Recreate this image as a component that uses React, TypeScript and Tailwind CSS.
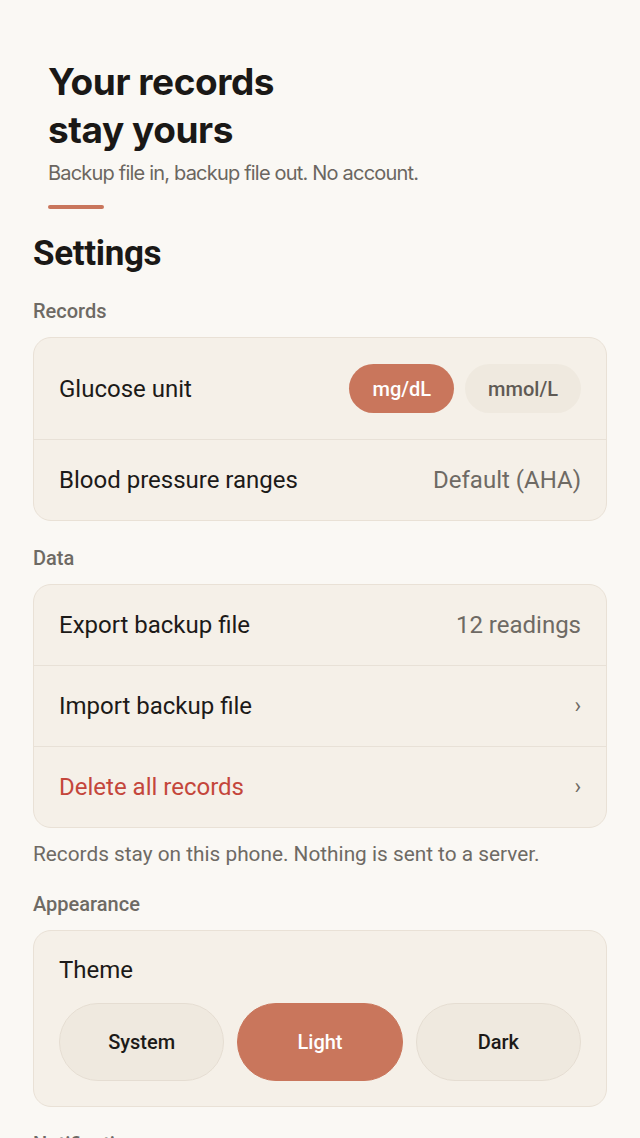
import { ReactNode } from "react";

const SANS = "font-['Roboto','Liberation_Sans',sans-serif]";
const DISPLAY = "font-['Inter','Roboto',sans-serif]";

function SectionLabel({ children }: { children: ReactNode }) {
  return (
    <div className="mt-[25px] text-[20px] leading-[24px] font-medium text-[#6e6a64]">
      {children}
    </div>
  );
}

function Card({ children }: { children: ReactNode }) {
  return (
    <div className="mt-[14px] overflow-hidden rounded-[18px] border-[1.5px] border-[#e9e1d6] bg-[#f5f0e8]">
      {children}
    </div>
  );
}

function Row({
  label,
  right,
  danger,
  chevron,
  last,
}: {
  label: string;
  right?: ReactNode;
  danger?: boolean;
  chevron?: boolean;
  last?: boolean;
}) {
  return (
    <div
      className={
        "flex items-center justify-between px-[25px] py-[26px] " +
        (last ? "" : "border-b-[1.5px] border-[#e8e1d7]")
      }
    >
      <span
        className={
          "text-[24px] leading-[28px] " +
          (danger ? "text-[#c4463b]" : "text-[#1c1a18]")
        }
      >
        {label}
      </span>
      {right && (
        <span className="text-[24px] leading-[28px] text-[#6e6a64]">{right}</span>
      )}
      {chevron && (
        <span className="text-[22px] leading-[28px] text-[#6e6a64]">›</span>
      )}
    </div>
  );
}

export default function App() {
  return (
    <div className={`min-h-[1138px] bg-[#faf8f4] px-[33px] pt-[58px] pb-10 ${SANS}`}>
      {/* Hero */}
      <div className="px-[15px]">
        <h1
          className={`${DISPLAY} text-[37px] leading-[48px] font-bold tracking-[-0.012em] text-[#1a1816]`}
        >
          Your records
          <br />
          stay yours
        </h1>
        <p
          className={`${DISPLAY} mt-[6px] text-[20px] leading-[26px] tracking-[-0.04em] text-[#6b6660]`}
        >
          Backup file in, backup file out. No account.
        </p>
        <div className="mt-[19px] h-[4px] w-[56px] rounded-full bg-[#c9765c]" />
      </div>

      <h2 className="mt-[25px] text-[35px] leading-[40px] font-bold tracking-[-0.01em] text-[#1a1816]">
        Settings
      </h2>

      {/* Records */}
      <SectionLabel>Records</SectionLabel>
      <Card>
        <div className="flex items-center justify-between border-b-[1.5px] border-[#e8e1d7] px-[25px] py-[26px]">
          <span className="text-[24px] leading-[28px] text-[#1c1a18]">Glucose unit</span>
          <div className="flex gap-[11px]">
            <button className="h-[49px] rounded-full bg-[#c9765c] px-[23px] text-[20px] font-medium text-white">
              mg/dL
            </button>
            <button className="h-[49px] rounded-full bg-[#efe9df] px-[23px] text-[20px] font-medium text-[#5f5a55]">
              mmol/L
            </button>
          </div>
        </div>
        <Row label="Blood pressure ranges" right="Default (AHA)" last />
      </Card>

      {/* Data */}
      <SectionLabel>Data</SectionLabel>
      <Card>
        <Row label="Export backup file" right="12 readings" />
        <Row label="Import backup file" chevron />
        <Row label="Delete all records" danger chevron last />
      </Card>
      <p className="mt-[13px] text-[20.8px] leading-[26px] text-[#6e6a64]">
        Records stay on this phone. Nothing is sent to a server.
      </p>

      {/* Appearance */}
      <SectionLabel>Appearance</SectionLabel>
      <Card>
        <div className="px-[25px] pt-[25px] pb-[25px]">
          <div className="text-[24px] leading-[28px] text-[#1c1a18]">Theme</div>
          <div className="mt-[19px] flex gap-[13px]">
            {["System", "Light", "Dark"].map((t) => (
              <button
                key={t}
                className={
                  "h-[78px] flex-1 rounded-full border-[1.5px] text-[20px] font-medium " +
                  (t === "Light"
                    ? "border-[#c9765c] bg-[#c9765c] text-white"
                    : "border-[#e5ddd2] bg-[#efe9df] text-[#1c1a18]")
                }
              >
                {t}
              </button>
            ))}
          </div>
        </div>
      </Card>

      {/* Notifications */}
      <SectionLabel>Notifications</SectionLabel>
      <Card>
        <Row label="Daily reminder" right="Off" last />
      </Card>
    </div>
  );
}
